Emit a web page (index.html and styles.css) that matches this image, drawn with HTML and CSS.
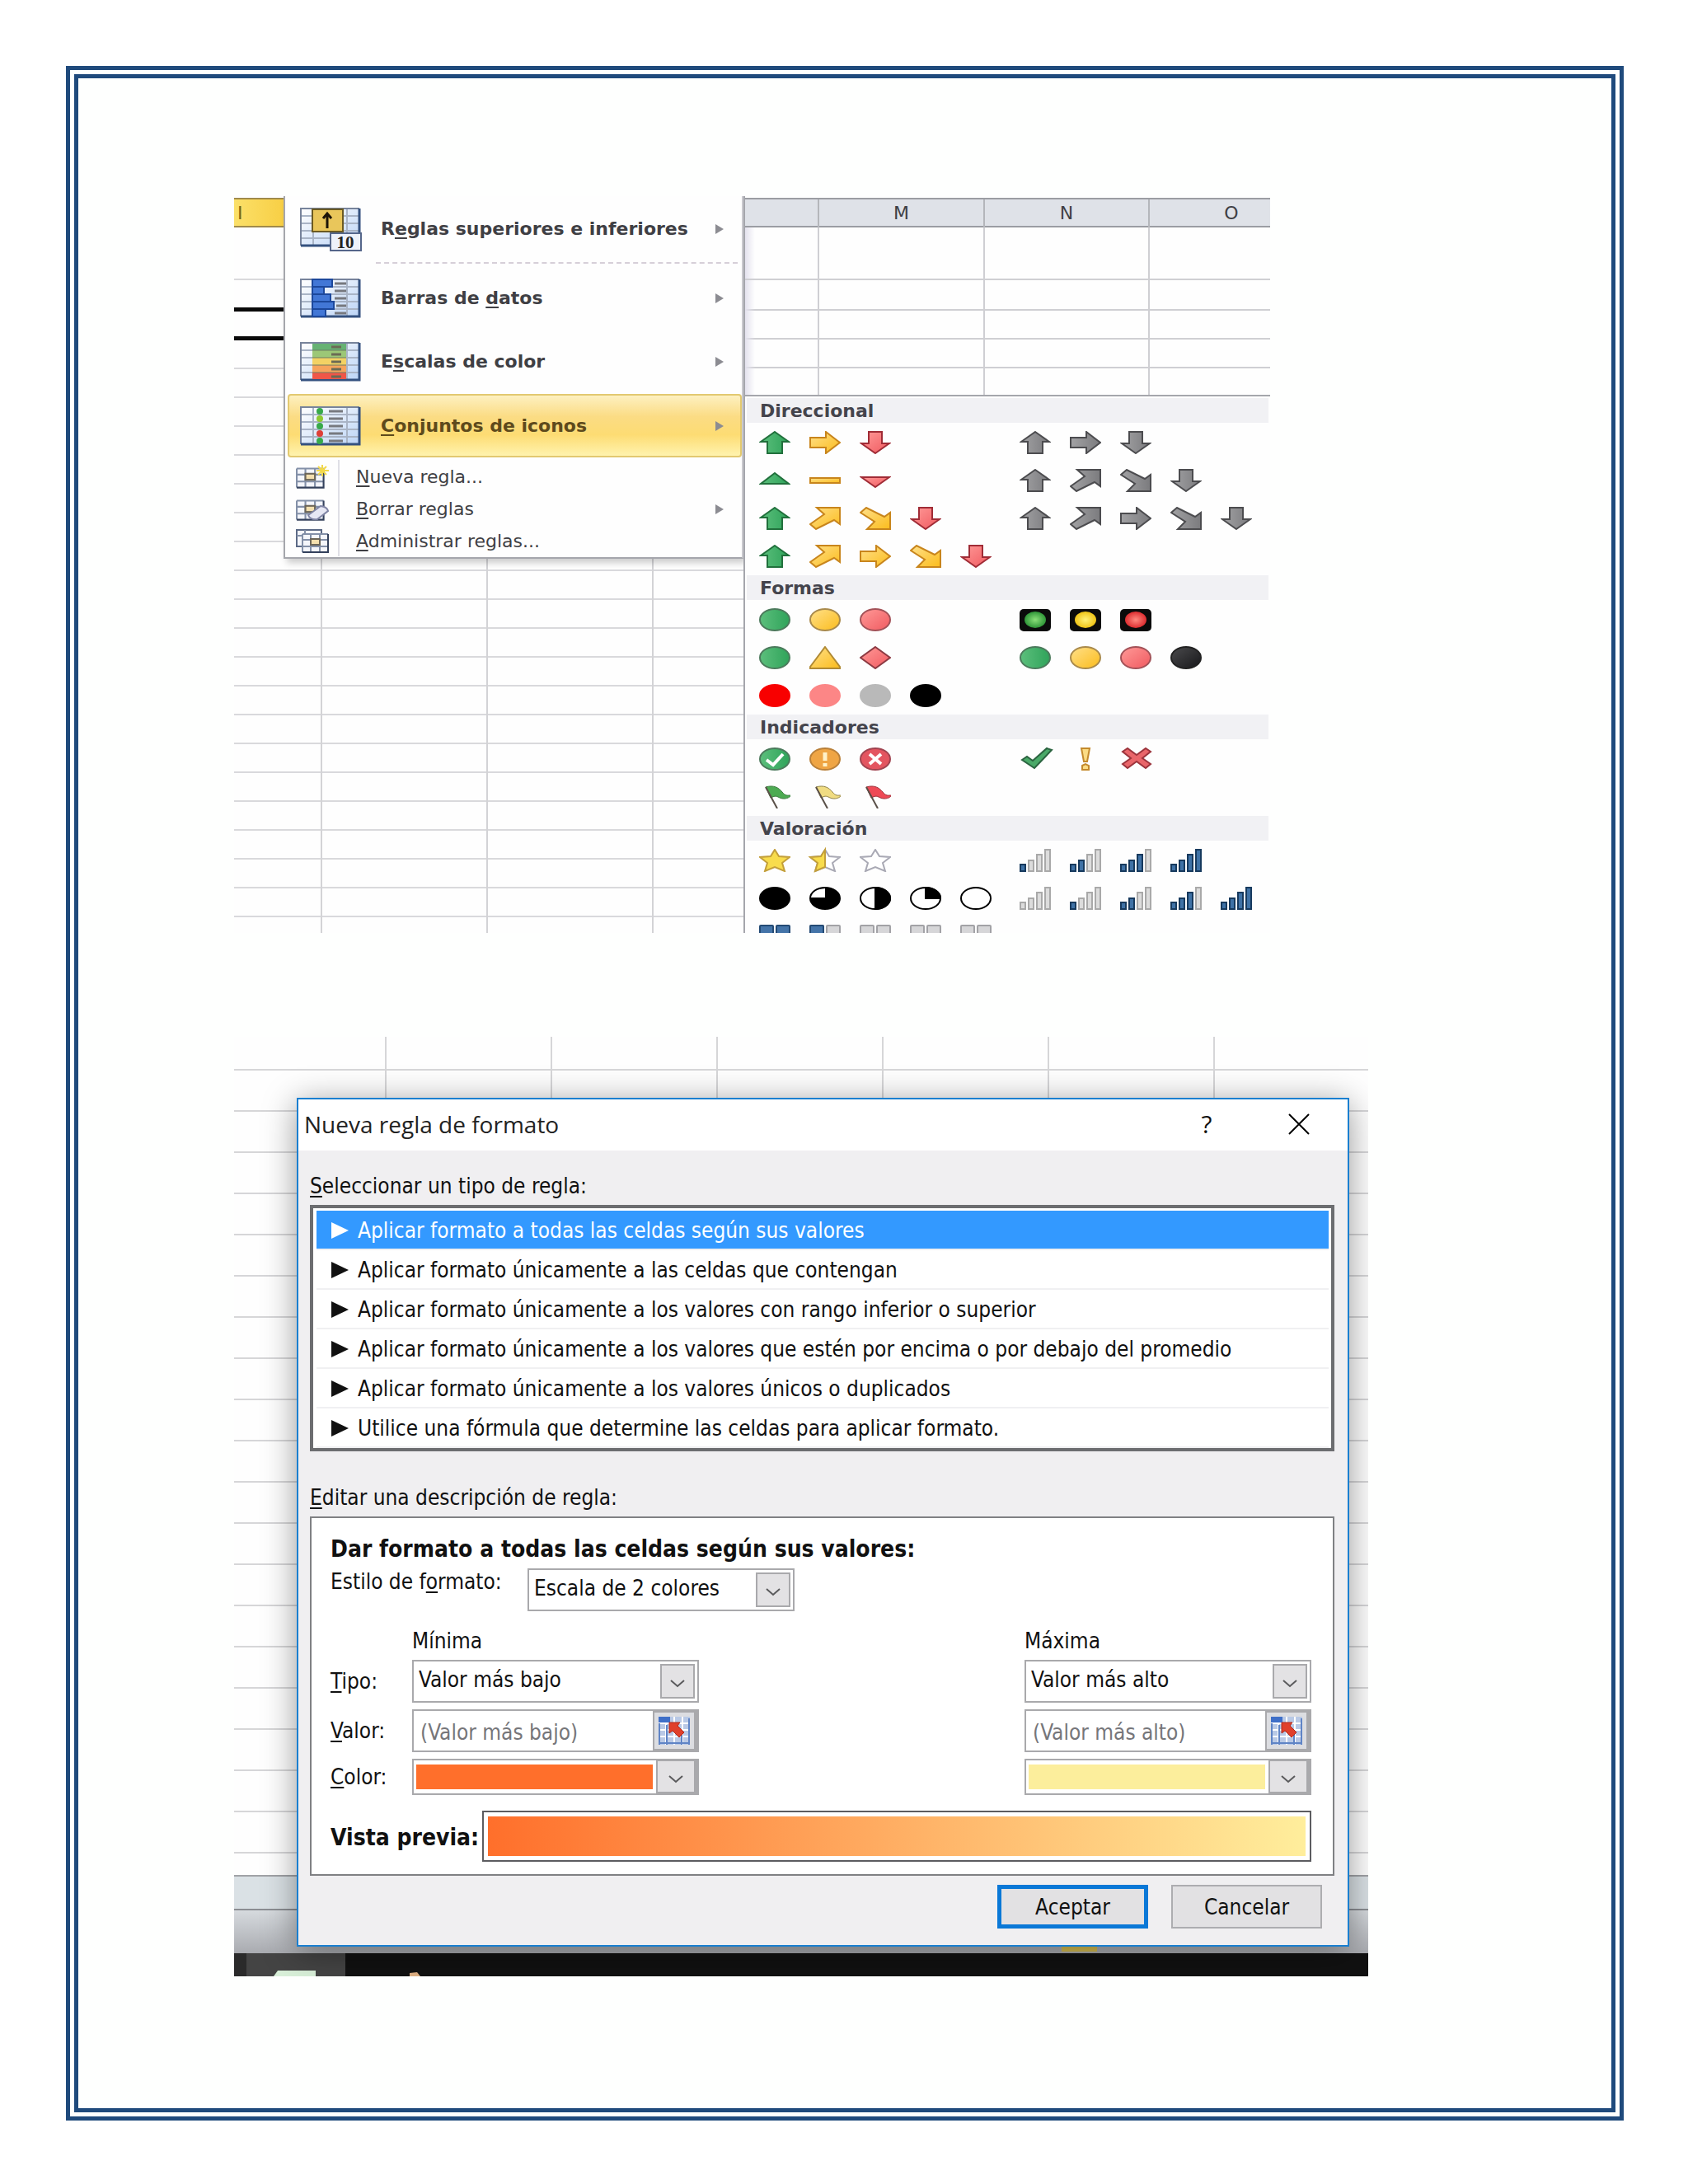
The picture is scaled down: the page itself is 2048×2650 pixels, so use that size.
FILE: index.html
```html
<!DOCTYPE html>
<html lang="es">
<head>
<meta charset="utf-8">
<title>Formato condicional</title>
<meta name="viewport" content="width=device-width, initial-scale=1">
<link rel="stylesheet" href="styles.css">
</head>
<body>
<svg class="defs" aria-hidden="true">
  <defs>
    <linearGradient id="g-green"><stop offset="0" stop-color="#5cbf7c"/><stop offset="1" stop-color="#2fa35a"/></linearGradient>
    <linearGradient id="g-gold" x1="0" y1="0" x2="1" y2="1"><stop offset="0" stop-color="#ffe08a"/><stop offset="1" stop-color="#fbbc1c"/></linearGradient>
    <linearGradient id="g-red" x1="0" y1="0" x2="1" y2="1"><stop offset="0" stop-color="#ff9a98"/><stop offset="1" stop-color="#f05a60"/></linearGradient>
    <linearGradient id="g-gray"><stop offset="0" stop-color="#a2a2a4"/><stop offset="1" stop-color="#7b7b7e"/></linearGradient>
    <linearGradient id="g-dark" x1="0" y1="0" x2="1" y2="1"><stop offset="0" stop-color="#4b4b4d"/><stop offset="1" stop-color="#17171a"/></linearGradient>
    <linearGradient id="g-cell" x1="0" y1="0" x2="1" y2="1"><stop offset="0" stop-color="#ffffff"/><stop offset="1" stop-color="#bcd4f6"/></linearGradient>
    <radialGradient id="l-green"><stop offset="0" stop-color="#8be07a"/><stop offset="1" stop-color="#2f9638"/></radialGradient>
    <radialGradient id="l-gold"><stop offset="0" stop-color="#fff27a"/><stop offset="1" stop-color="#efc416"/></radialGradient>
    <radialGradient id="l-red"><stop offset="0" stop-color="#ff8a80"/><stop offset="1" stop-color="#dd2d30"/></radialGradient>
  </defs>
  <symbol id="up" viewBox="0 0 38 28"><path d="M19 1 36 13H28V27H10V13H2Z"/></symbol>
  <symbol id="down" viewBox="0 0 38 28"><path d="M19 27 36 15H27V1H11V15H2Z"/></symbol>
  <symbol id="right" viewBox="0 0 38 28"><path d="M1 8H20V1L37 14 20 27V20H1Z"/></symbol>
  <symbol id="ne" viewBox="0 0 38 28"><path d="M9 1H37V21L30 16 8 27 1 21 18 9Z"/></symbol>
  <symbol id="se" viewBox="0 0 38 28"><path d="M9 27H37V7L30 12 8 1 1 7 18 18Z"/></symbol>
  <symbol id="tri-up" viewBox="0 0 38 28"><path d="M19 5 36 18H2Z"/></symbol>
  <symbol id="tri-down" viewBox="0 0 38 28"><path d="M19 22 36 10H2Z"/></symbol>
  <symbol id="dash" viewBox="0 0 38 28"><path d="M1 11H37V17H1Z"/></symbol>
  <symbol id="ball" viewBox="0 0 38 28"><ellipse cx="19" cy="14" rx="18" ry="13"/></symbol>
  <symbol id="warn" viewBox="0 0 38 28"><path d="M19 1 37 25V27H1V25Z"/></symbol>
  <symbol id="rhomb" viewBox="0 0 38 28"><path d="M19 1 37 14 19 27 1 14Z"/></symbol>
  <symbol id="lamp" viewBox="0 0 38 28"><rect x="0" y="1" width="38" height="27" rx="5" fill="#0b0b0b" stroke="none"/><ellipse cx="19" cy="14" rx="13" ry="10" stroke="none"/></symbol>
  <symbol id="flag" viewBox="0 0 38 28"><path d="M8 2C18-1 24 3 28 8 32 13 34 12 39 12 35 17 28 17 23 14 19 12 17 14 14 15Z" stroke-width="1"/><path d="M8 2 22 28" fill="none" stroke="#5a5048" stroke-width="2"/></symbol>
  <symbol id="star" viewBox="0 0 38 28"><path d="M19 1 24 9 37 10 28 17 31 27 19 22 7 27 10 17 1 10 14 9Z"/></symbol>
  <symbol id="b1" viewBox="0 0 38 28"><rect x="1" y="19" width="6" height="8"/></symbol>
  <symbol id="b2" viewBox="0 0 38 28"><rect x="11" y="14" width="6" height="13"/></symbol>
  <symbol id="b3" viewBox="0 0 38 28"><rect x="21" y="7" width="6" height="20"/></symbol>
  <symbol id="b4" viewBox="0 0 38 28"><rect x="31" y="1" width="6" height="26"/></symbol>
  <symbol id="bars" viewBox="0 0 38 28"><use href="#b1"/><use href="#b2"/><use href="#b3"/><use href="#b4"/></symbol>
  <symbol id="bars0" viewBox="0 0 38 28"><use href="#bars" fill="#dcdcdc" stroke="#a9a9a9"/></symbol>
  <symbol id="bars1" viewBox="0 0 38 28"><use href="#bars" fill="#dcdcdc" stroke="#a9a9a9"/><g fill="#3f72a6" stroke="#173a5e"><use href="#b1"/></g></symbol>
  <symbol id="bars2" viewBox="0 0 38 28"><use href="#bars" fill="#dcdcdc" stroke="#a9a9a9"/><g fill="#3f72a6" stroke="#173a5e"><use href="#b1"/><use href="#b2"/></g></symbol>
  <symbol id="bars3" viewBox="0 0 38 28"><use href="#bars" fill="#dcdcdc" stroke="#a9a9a9"/><g fill="#3f72a6" stroke="#173a5e"><use href="#b1"/><use href="#b2"/><use href="#b3"/></g></symbol>
  <symbol id="bars4" viewBox="0 0 38 28"><use href="#bars" fill="#3f72a6" stroke="#173a5e"/></symbol>
  <symbol id="boxes" viewBox="0 0 38 28"><rect x="1" y="1" width="16" height="12" rx="1"/><rect x="21" y="1" width="16" height="12" rx="1"/><rect x="1" y="15" width="16" height="12" rx="1"/><rect x="21" y="15" width="16" height="12" rx="1"/></symbol>
  <symbol id="sheet" viewBox="0 0 74 54"><rect x="1" y="1" width="71" height="45" fill="url(#g-cell)" stroke="none"/><path d="M1 10H72M1 19H72M1 28H72M1 37H72M16 1V46M57 1V46" stroke="#a9b4c6" fill="none" stroke-width="2"/><path d="M1 46V1H72" fill="none" stroke="#77839b" stroke-width="2"/><path d="M72 1V46H1" fill="none" stroke="#34517f" stroke-width="3"/></symbol>
  <symbol id="mini" viewBox="0 0 40 28"><rect x="1" y="4" width="31" height="22" fill="#f4f6fb"/><path d="M1 4H32M1 11H32M1 19H32M1 4V26M11 4V26M22 4V26" stroke="#8390a8" stroke-width="2" fill="none"/><path d="M32 4V26H1" stroke="#34415c" stroke-width="2" fill="none"/><rect x="11" y="10" width="11" height="7" fill="#f3dfae" stroke="#6b6558" stroke-width="2"/></symbol>
  <symbol id="chev" viewBox="0 0 20 12"><path d="M2 2 10 9 18 2" fill="none" stroke="#5a5a5c" stroke-width="2"/></symbol>
  <symbol id="picker" viewBox="0 0 38 34"><rect x="0" y="0" width="38" height="34" fill="#b9c9e6"/><rect x="0" y="0" width="14" height="7" fill="#3f6fc8"/><path d="M0 8H38M0 16H38M0 24H38M9 8V34M19 0V34M29 0V34" stroke="#fff" stroke-width="2"/><path d="M1 8V34M10 10V34M0 32H38M28 18V34M37 2V34" stroke="#5f84c6" stroke-width="2"/><path d="M13 7H26L23 11 31 19 25 25 17 17 13 20Z" fill="#e0402c" stroke="#b02a1c"/></symbol>
</svg>

<main class="page">

  <figure class="sheet">
    <div class="sheet-left">
      <div class="column-i">
        <div class="active-head">I</div>
        <div class="tall-row"></div>
        <div class="thick-row"></div>
        <div class="thick-row"></div>
      </div>
      <nav class="menu">
        <button class="item first"><svg class="big"><use href="#sheet"/><rect x="16" y="2" width="37" height="27" fill="#e9c65b" stroke="#6b5a22" stroke-width="2"/><path d="M34 25V9M29 13 34 7 39 13" stroke="#1c1408" stroke-width="3" fill="none"/><rect x="38" y="31" width="37" height="21" fill="#eef2fa" stroke="#55668a" stroke-width="2"/><text x="56" y="49" class="ten" text-anchor="middle">10</text></svg><span>R<u>e</u>glas superiores e inferiores</span><i class="more"></i></button>
        <button class="item"><svg class="big"><use href="#sheet"/><path d="M16 1H40V10H30V19H38V28H42V37H32V46H16Z" fill="#4277d6" stroke="#1c489c" stroke-width="2"/><path d="M16 10H30M16 19H30M16 28H38M16 37H32" stroke="#1c489c" stroke-width="2"/><path d="M43 6H57M43 15H57M43 24H57M45 33H57M43 42H57" stroke="#77797f" stroke-width="3"/></svg><span>Barras de <u>d</u>atos</span><i class="more"></i></button>
        <button class="item"><svg class="big"><use href="#sheet"/><path d="M16 2H57V10H16Z" fill="#66b273"/><path d="M16 10H57V19H16Z" fill="#9cc777"/><path d="M16 19H57V28H16Z" fill="#f3d264"/><path d="M16 28H57V37H16Z" fill="#f6a45c"/><path d="M16 37H57V45H16Z" fill="#ef5648"/><path d="M16 10H57M16 19H57M16 28H57M16 37H57" stroke="#6f7c62" stroke-width="1"/><path d="M39 6H51M39 15H51M39 24H51M39 33H51M39 42H51" stroke="#6b6a55" stroke-width="3"/></svg><span>E<u>s</u>calas de color</span><i class="more"></i></button>
        <button class="item active"><svg class="big"><use href="#sheet"/><path d="M36 6H53M36 15H53M36 24H53M36 33H53M36 42H53" stroke="#77797f" stroke-width="3"/><g fill="#38a94b"><circle cx="25" cy="6" r="4"/><circle cx="25" cy="15" r="4" fill="#8fc931"/><circle cx="25" cy="24" r="4"/><circle cx="25" cy="33" r="4" fill="#de3f38"/><circle cx="25" cy="42" r="4"/></g></svg><span><u>C</u>onjuntos de iconos</span><i class="more"></i></button>
        <div class="commands">
          <button class="item small"><svg class="little"><use href="#mini"/><path d="M32 0V14M25 7H40M27 2 37 12M37 2 27 12" stroke="#f3d94a" stroke-width="2"/></svg><span><u>N</u>ueva regla...</span></button>
          <button class="item small"><svg class="little"><use href="#mini"/><path d="M15 22 30 11Q38 12 39 17L26 27Q17 28 15 22Z" fill="#e6e7f4" stroke="#7f84a4" stroke-width="2"/></svg><span><u>B</u>orrar reglas</span><i class="more"></i></button>
          <button class="item small"><svg class="little"><rect x="1" y="1" width="30" height="20" fill="#f4f6fb" stroke="#5c6a86" stroke-width="2"/><path d="M1 8H31M11 1V21" stroke="#8390a8" stroke-width="2"/><g transform="translate(7 2)"><use href="#mini" width="40" height="28"/></g></svg><span><u>A</u>dministrar reglas...</span></button>
        </div>
      </nav>
    </div>

    <div class="sheet-right">
      <div class="heads"><span></span><span>M</span><span>N</span><span>O</span></div>
      <div class="cells"><div class="tall-row"></div></div>
      <div class="gallery">
        <h3>Direccional</h3>
        <div class="sets">
          <button class="set"><svg fill="url(#g-green)" stroke="#21703c"><use href="#up"/></svg><svg fill="url(#g-gold)" stroke="#c8851c"><use href="#right"/></svg><svg fill="url(#g-red)" stroke="#a02c36"><use href="#down"/></svg></button>
          <button class="set"><svg fill="url(#g-gray)" stroke="#4c4c4f"><use href="#up"/></svg><svg fill="url(#g-gray)" stroke="#4c4c4f"><use href="#right"/></svg><svg fill="url(#g-gray)" stroke="#4c4c4f"><use href="#down"/></svg></button>
          <button class="set"><svg fill="url(#g-green)" stroke="#21703c"><use href="#tri-up"/></svg><svg fill="url(#g-gold)" stroke="#c8851c"><use href="#dash"/></svg><svg fill="url(#g-red)" stroke="#a02c36"><use href="#tri-down"/></svg></button>
          <button class="set"><svg fill="url(#g-gray)" stroke="#4c4c4f"><use href="#up"/></svg><svg fill="url(#g-gray)" stroke="#4c4c4f"><use href="#ne"/></svg><svg fill="url(#g-gray)" stroke="#4c4c4f"><use href="#se"/></svg><svg fill="url(#g-gray)" stroke="#4c4c4f"><use href="#down"/></svg></button>
          <button class="set"><svg fill="url(#g-green)" stroke="#21703c"><use href="#up"/></svg><svg fill="url(#g-gold)" stroke="#c8851c"><use href="#ne"/></svg><svg fill="url(#g-gold)" stroke="#c8851c"><use href="#se"/></svg><svg fill="url(#g-red)" stroke="#a02c36"><use href="#down"/></svg></button>
          <button class="set"><svg fill="url(#g-gray)" stroke="#4c4c4f"><use href="#up"/></svg><svg fill="url(#g-gray)" stroke="#4c4c4f"><use href="#ne"/></svg><svg fill="url(#g-gray)" stroke="#4c4c4f"><use href="#right"/></svg><svg fill="url(#g-gray)" stroke="#4c4c4f"><use href="#se"/></svg><svg fill="url(#g-gray)" stroke="#4c4c4f"><use href="#down"/></svg></button>
          <button class="set"><svg fill="url(#g-green)" stroke="#21703c"><use href="#up"/></svg><svg fill="url(#g-gold)" stroke="#c8851c"><use href="#ne"/></svg><svg fill="url(#g-gold)" stroke="#c8851c"><use href="#right"/></svg><svg fill="url(#g-gold)" stroke="#c8851c"><use href="#se"/></svg><svg fill="url(#g-red)" stroke="#a02c36"><use href="#down"/></svg></button>
        </div>
        <h3>Formas</h3>
        <div class="sets">
          <button class="set"><svg fill="url(#g-green)" stroke="#4c7a5c"><use href="#ball"/></svg><svg fill="url(#g-gold)" stroke="#a98a4c"><use href="#ball"/></svg><svg fill="url(#g-red)" stroke="#a35258"><use href="#ball"/></svg></button>
          <button class="set"><svg fill="url(#l-green)"><use href="#lamp"/></svg><svg fill="url(#l-gold)"><use href="#lamp"/></svg><svg fill="url(#l-red)"><use href="#lamp"/></svg></button>
          <button class="set"><svg fill="url(#g-green)" stroke="#4c7a5c"><use href="#ball"/></svg><svg fill="url(#g-gold)" stroke="#b08a34"><use href="#warn"/></svg><svg fill="url(#g-red)" stroke="#8c3a42"><use href="#rhomb"/></svg></button>
          <button class="set"><svg fill="url(#g-green)" stroke="#4c7a5c"><use href="#ball"/></svg><svg fill="url(#g-gold)" stroke="#a98a4c"><use href="#ball"/></svg><svg fill="url(#g-red)" stroke="#a35258"><use href="#ball"/></svg><svg fill="url(#g-dark)" stroke="#222"><use href="#ball"/></svg></button>
          <button class="set"><svg fill="#f80000" stroke="#f80000"><use href="#ball"/></svg><svg fill="#fc8686" stroke="#fc8686"><use href="#ball"/></svg><svg fill="#b9b9b9" stroke="#b9b9b9"><use href="#ball"/></svg><svg fill="#000" stroke="#000"><use href="#ball"/></svg></button>
        </div>
        <h3>Indicadores</h3>
        <div class="sets">
          <button class="set"><svg fill="url(#g-green)" stroke="#4c7a5c"><use href="#ball"/><path d="M9 15 17 21 29 8" fill="none" stroke="#fff" stroke-width="4"/></svg><svg fill="#efa544" stroke="#b9803a"><use href="#ball"/><path d="M19 6V16M19 19V23" stroke="#fff2c8" stroke-width="5"/></svg><svg fill="#e35560" stroke="#a04450"><use href="#ball"/><path d="M12 8 26 20M26 8 12 20" stroke="#fff" stroke-width="4"/></svg></button>
          <button class="set"><svg fill="#4aa968" stroke="#2b6440"><path d="M3 15 9 11 16 16 33 1 39 3 18 25Z"/></svg><svg fill="#fbdc84" stroke="#c48a2c"><path d="M14 1H24L21 17H17ZM15 22 19 20 23 22V27H15Z"/></svg><svg fill="#e9666a" stroke="#9c343c"><path d="M3 5 9 1 20 9 31 1 37 5 27 13 37 20 31 25 20 17 9 25 3 20 13 13Z"/></svg></button>
          <button class="set"><svg fill="#4dab52" stroke="#3b7a3e"><use href="#flag"/></svg><svg fill="#f0dc82" stroke="#8f8146"><use href="#flag"/></svg><svg fill="#ee4a56" stroke="#9c3038"><use href="#flag"/></svg></button>
        </div>
        <h3>Valoración</h3>
        <div class="sets">
          <button class="set"><svg fill="#f8dc4c" stroke="#c39f3a"><use href="#star"/></svg><svg fill="#fff" stroke="#a9a9b4"><use href="#star"/><path d="M19 1V22L7 27 10 17 1 10 14 9Z" fill="#f8dc4c" stroke="#c39f3a"/></svg><svg fill="#fff" stroke="#a9a9b4"><use href="#star"/></svg></button>
          <button class="set"><svg><use href="#bars1"/></svg><svg><use href="#bars2"/></svg><svg><use href="#bars3"/></svg><svg><use href="#bars4"/></svg></button>
          <button class="set"><svg fill="#000" stroke="#000"><use href="#ball"/></svg><svg fill="#000" stroke="#000"><use href="#ball"/><path d="M19 13V2Q4 3 2 13Z" fill="#fff" stroke="none"/></svg><svg fill="#fff" stroke="#000"><use href="#ball"/><path d="M19 1A18 13 0 0 1 19 27Z" fill="#000"/></svg><svg fill="#fff" stroke="#000"><use href="#ball"/><path d="M19 1A18 13 0 0 1 37 14H19Z" fill="#000"/></svg><svg fill="#fff" stroke="#000"><use href="#ball"/></svg></button>
          <button class="set"><svg><use href="#bars0"/></svg><svg><use href="#bars1"/></svg><svg><use href="#bars2"/></svg><svg><use href="#bars3"/></svg><svg><use href="#bars4"/></svg></button>
        </div>
        <div class="sets cut">
          <button class="set"><svg fill="#4474a8" stroke="#234a74"><use href="#boxes"/></svg><svg fill="#d6d6d8" stroke="#a2a2a6"><use href="#boxes"/><rect x="1" y="1" width="16" height="12" rx="1" fill="#4474a8" stroke="#234a74"/></svg><svg fill="#d6d6d8" stroke="#a2a2a6"><use href="#boxes"/></svg><svg fill="#d6d6d8" stroke="#a2a2a6"><use href="#boxes"/></svg><svg fill="#d6d6d8" stroke="#a2a2a6"><use href="#boxes"/></svg></button>
        </div>
      </div>
    </div>
  </figure>

  <figure class="desk">
    <svg class="taskbar" viewBox="0 0 1376 28" preserveAspectRatio="xMinYMax slice" aria-hidden="true"><rect width="1376" height="28" fill="#111"/><rect width="15" height="28" fill="#2a2a2a"/><rect x="15" width="120" height="28" fill="#444"/><path d="M48 28 53 21H99V28Z" fill="#d9f0d9"/><path d="M213 28V24L222 23 226 28Z" fill="#e0b184"/></svg>
    <span class="status-mark"></span>
    <form class="dialog">
      <header class="titlebar"><h2>Nueva regla de formato</h2><button type="button" class="tool">?</button><button type="button" class="tool" aria-label="Cerrar"><svg width="26" height="26"><path d="M1 1 25 25M25 1 1 25" stroke="#000" stroke-width="2"/></svg></button></header>
      <div class="dialog-body">
        <p class="caption"><u>S</u>eleccionar un tipo de regla:</p>
        <ul class="rules">
          <li class="chosen"><i class="tri"></i>Aplicar formato a todas las celdas según sus valores</li>
          <li><i class="tri"></i>Aplicar formato únicamente a las celdas que contengan</li>
          <li><i class="tri"></i>Aplicar formato únicamente a los valores con rango inferior o superior</li>
          <li><i class="tri"></i>Aplicar formato únicamente a los valores que estén por encima o por debajo del promedio</li>
          <li><i class="tri"></i>Aplicar formato únicamente a los valores únicos o duplicados</li>
          <li><i class="tri"></i>Utilice una fórmula que determine las celdas para aplicar formato.</li>
        </ul>
        <p class="caption second"><u>E</u>ditar una descripción de regla:</p>
        <section class="editor">
          <h3>Dar formato a todas las celdas según sus valores:</h3>
          <div class="style-row">
            <label for="style">Estilo de f<u>o</u>rmato:</label>
            <div class="drop"><select id="style"><option>Escala de 2 colores</option></select><span class="arrow"><svg><use href="#chev"/></svg></span></div>
          </div>
          <div class="scale">
            <span></span><span class="head">Mínima</span><span class="head max">Máxima</span>
            <label for="type-min"><u>T</u>ipo:</label>
            <div class="drop"><select id="type-min"><option>Valor más bajo</option></select><span class="arrow"><svg><use href="#chev"/></svg></span></div>
            <div class="drop max"><select id="type-max" aria-label="Tipo"><option>Valor más alto</option></select><span class="arrow"><svg><use href="#chev"/></svg></span></div>
            <label for="value-min"><u>V</u>alor:</label>
            <div class="field"><input id="value-min" type="text" value="(Valor más bajo)"><button type="button" class="pick" aria-label="Elegir celda"><svg><use href="#picker"/></svg></button></div>
            <div class="field max"><input id="value-max" type="text" value="(Valor más alto)" aria-label="Valor"><button type="button" class="pick" aria-label="Elegir celda"><svg><use href="#picker"/></svg></button></div>
            <label for="color-min"><u>C</u>olor:</label>
            <button type="button" id="color-min" class="color"><span class="swatch orange"></span><span class="chip"><svg><use href="#chev"/></svg></span></button>
            <button type="button" class="color max" aria-label="Color"><span class="swatch yellow"></span><span class="chip"><svg><use href="#chev"/></svg></span></button>
          </div>
          <div class="preview-row"><strong>Vista previa:</strong><div class="preview"></div></div>
        </section>
        <div class="actions"><button type="submit" class="ok">Aceptar</button><button type="button">Cancelar</button></div>
      </div>
    </form>
  </figure>

</main>
</body>
</html>
```
FILE: styles.css
```css
* { box-sizing: border-box; }

body { margin: 0; background: #fff; color: #111; }

button, input, select { font: inherit; color: inherit; margin: 0; border-radius: 0; }
button { background: none; border: 0; padding: 0; text-align: left; }
h2, h3, p, ul, figure { margin: 0; padding: 0; font-size: inherit; }
u { text-decoration-thickness: 2px; text-underline-offset: 3px; text-decoration-skip-ink: none; }

.defs { position: absolute; width: 0; height: 0; }

.page {
  margin: 80px 78px 78px 80px;
  padding: 143px 189px 160px;
  border: 15px double #1f4a7c;
  background: #fefffe;
  display: flex;
  flex-direction: column;
  gap: 126px;
}

/* Spreadsheet with the conditional format menu open */
.sheet {
  width: 100%;
  max-width: 1257px;
  display: grid;
  grid-template-columns: 618px 1fr;
  overflow: hidden;
  font-family: "DejaVu Sans", sans-serif;
  font-size: 22px;
  color: #3f3f44;
}

.sheet-left {
  display: grid;
  grid-template-columns: 60px 1fr;
  align-items: start;
  background:
    linear-gradient(#d3d3d6, #d3d3d6) 105px 440px / 2px 100% no-repeat,
    linear-gradient(#d3d3d6, #d3d3d6) 306px 440px / 2px 100% no-repeat,
    linear-gradient(#d3d3d6, #d3d3d6) 507px 440px / 2px 100% no-repeat,
    linear-gradient(transparent 33px, #d9d9dc 33px) 0 210px / 100% 35px repeat-y;
  background-color: #fefefe;
}

.column-i { background: #fefefe; }
.active-head {
  margin-top: 2px;
  height: 36px;
  line-height: 34px;
  padding-left: 4px;
  border: solid #a08a4a;
  border-width: 2px 0;
  background: linear-gradient(90deg, #fbe069, #f8cf45);
  color: #7a6410;
}
.tall-row { height: 64px; border-bottom: 2px solid #cfcfd3; }
.thick-row { height: 35px; border-bottom: 5px solid #0a0a0a; }
.column-i .tall-row { margin-bottom: 3px; border-color: #d9d9dc; }

.menu {
  background: #fefefe;
  border: 2px solid #a5a6ac;
  border-top: 0;
  border-right-color: #c9c9ce;
  box-shadow: 4px 5px 8px rgba(0, 0, 0, .2);
  height: 440px;
}
.item {
  display: flex;
  align-items: center;
  width: 100%;
  height: 77px;
  padding: 2px 22px 0 17px;
  font-weight: bold;
}
.item span { flex: 1; white-space: nowrap; }
.item.first { height: 83px; padding-top: 0; padding-bottom: 4px; position: relative; margin-bottom: 1px; }
.item.first::after {
  content: "";
  position: absolute;
  left: 110px;
  right: 5px;
  bottom: 1px;
  border-bottom: 2px dashed #d6cfd8;
}
.item.active {
  margin: 2px 0 3px 3px;
  padding: 0 20px 0 12px;
  width: auto;
  min-width: calc(100% - 3px);
  border: 2px solid #e2c970;
  border-radius: 4px;
  background: linear-gradient(#fdf0c0, #fbdc84 35%, #fddc73 65%, #fff3ae);
  color: #5e4a1c;
}
.big { width: 76px; height: 54px; margin: 6px 23px 0 0; flex: none; }
.item.first .big { margin-top: 2px; }
.item .more {
  border: solid transparent;
  border-width: 6px 0 6px 10px;
  border-left-color: #8c8c92;
}
.ten { font: bold 21px "Liberation Serif", serif; fill: #222; }
.commands {
  background: linear-gradient(#dfdfe6, #dfdfe6) 64px 0 / 2px 100% no-repeat;
}
.item.small { height: 39px; padding-left: 13px; font-weight: normal; }
.little { width: 42px; height: 30px; margin-right: 31px; }

.sheet-right { border-left: 2px solid #a5a6ac; background: #fefefe; min-width: 0; }
.heads {
  margin-top: 2px;
  height: 36px;
  display: grid;
  grid-template-columns: 90px 201px 200px 200px;
  background: #dfe2e8;
  border: solid #9b9da3;
  border-width: 2px 0;
}
.heads span { border-right: 2px solid #b4b6bb; text-align: center; line-height: 34px; }
.cells {
  height: 203px;
  background:
    linear-gradient(#cfcfd3, #cfcfd3) 88px 0 / 2px 100% no-repeat,
    linear-gradient(#cfcfd3, #cfcfd3) 289px 0 / 2px 100% no-repeat,
    linear-gradient(#cfcfd3, #cfcfd3) 489px 0 / 2px 100% no-repeat,
    linear-gradient(90deg, #e4e2ee, transparent 12px),
    linear-gradient(transparent 33px, #cfcfd3 33px) 0 66px / 100% 35px no-repeat,
    linear-gradient(transparent 33px, #cfcfd3 33px) 0 101px / 100% 35px no-repeat,
    linear-gradient(transparent 33px, #cfcfd3 33px) 0 136px / 100% 35px no-repeat;
}
.gallery { border-top: 2px solid #a5a6ac; padding-top: 2px; }
.gallery h3 {
  height: 30px;
  line-height: 32px;
  margin: 0 2px;
  padding-left: 16px;
  background: #f1f1f4;
  color: #44444c;
}
.sets {
  display: grid;
  grid-template-columns: 316px 1fr;
  grid-auto-rows: 46px;
  padding: 1px 0 0 17px;
}
.sets.cut { height: 19px; overflow: hidden; padding-top: 0; }
.set { display: flex; align-items: center; gap: 23px; }
.set svg { width: 38px; height: 28px; stroke-width: 2; overflow: visible; flex: none; }

/* Dialog over the spreadsheet */
.desk {
  position: relative;
  overflow: hidden;
  width: 100%;
  max-width: 1376px;
  padding: 74px 23px 36px 76px;
  background:
    linear-gradient(#8b8e93, #8b8e93) 0 calc(100% - 80px) / 100% 2px no-repeat,
    linear-gradient(#d6dade, #a9abb0) 0 calc(100% - 28px) / 100% 52px no-repeat,
    linear-gradient(#a0a2a6, #a0a2a6) 0 calc(100% - 121px) / 100% 2px no-repeat,
    linear-gradient(#dae1e5, #dae1e5) 0 calc(100% - 82px) / 100% 40px no-repeat,
    linear-gradient(90deg, transparent 199px, #d6d6d8 199px) -16px 0 / 201px 100% repeat-x,
    linear-gradient(transparent 48px, #d6d6d8 48px) 0 -9px / 100% 50px repeat-y;
  background-color: #fefefe;
  font-family: "DejaVu Sans Condensed", "DejaVu Sans", sans-serif;
  font-size: 26px;
  line-height: 32px;
}
.taskbar { position: absolute; left: 0; bottom: 0; width: 100%; height: 28px; }
.status-mark { position: absolute; left: 73%; bottom: 30px; width: 43px; height: 12px; background: #d8bf50; }

.dialog {
  position: relative;
  border: 2px solid #1a7fd0;
  background: #f0eff1;
  box-shadow: 0 6px 38px rgba(0, 0, 0, .4);
}
.titlebar { display: flex; align-items: center; height: 62px; padding: 0 41px 3px 7px; background: #fff; }
.titlebar h2 { flex: 1; font: 28px/32px "Open Sans", sans-serif; color: #222; }
.tool { width: 36px; height: 36px; margin-left: 76px; display: flex; align-items: center; justify-content: center; font: 30px/36px "Open Sans", sans-serif; }
.dialog-body { padding: 27px 16px 20px 14px; }
.caption { margin-bottom: 7px; }
.caption.second { margin-top: 40px; }

.rules { list-style: none; background: #fff; border: 4px solid #6c6d70; padding: 3px 3px 0 4px; }
.rules li { display: flex; align-items: center; gap: 11px; height: 48px; padding: 2px 0 0 18px; border-bottom: 2px solid #f0f0f2; }
.rules .chosen { background: #3399ff; color: #fff; }
.tri { border: solid transparent; border-width: 10px 0 10px 21px; border-left-color: currentColor; }

.editor { background: #fff; border: 2px solid #7f8083; padding: 22px 26px 15px 23px; }
.editor h3, .preview-row strong { font-weight: bold; font-size: 28px; }
.style-row { display: grid; grid-template-columns: 239px 324px; align-items: start; margin-top: 7px; }

.drop { position: relative; }
.drop select {
  display: block;
  appearance: none;
  width: 100%;
  height: 52px;
  padding: 0 50px 4px 6px;
  border: 2px solid #a9a9ac;
  background: #fff;
}
.drop .arrow {
  position: absolute;
  top: 5px;
  right: 5px;
  width: 42px;
  height: 42px;
  display: flex;
  align-items: center;
  justify-content: center;
  border: 2px solid #a9a9ac;
  background: #e3e2e4;
  pointer-events: none;
}
.arrow svg, .chip svg { width: 20px; height: 12px; margin-top: 6px; }

.scale {
  display: grid;
  grid-template-columns: 99px 348px 1fr 348px;
  grid-template-rows: 30px 52px 52px 44px;
  row-gap: 8px;
  align-items: center;
  margin-top: 21px;
}
.scale .max { grid-column: 4; }
.field { display: flex; height: 52px; border: 2px solid #a9a9ac; background: #fff; }
.field input { flex: 1; min-width: 0; border: 0; padding: 4px 0 0 8px; background: none; color: #76767a; }
.pick { width: 54px; border: solid #a9a9ac; border-width: 2px 4px 2px 2px; background: #dcdde1; display: flex; align-items: center; justify-content: center; }
.pick svg { width: 38px; height: 34px; }
.color { display: flex; height: 44px; border: 2px solid #a9a9ac; background: #fff; }
.swatch { flex: 1; margin: 5px 4px 5px 3px; }
.orange { background: #ff6f2b; }
.yellow { background: #fcee9c; }
.chip { width: 50px; height: 40px; border: solid #a9a9ac; border-width: 1px 4px 2px 2px; background: #e3e2e4; display: flex; align-items: center; justify-content: center; }

.preview-row { display: flex; align-items: center; gap: 7px; margin-top: 19px; }
.preview-row strong { flex: none; width: 177px; white-space: nowrap; padding-top: 4px; }
.preview {
  flex: 1;
  height: 62px;
  padding: 5px;
  border: 2px solid #5c5c60;
  background: linear-gradient(90deg, #ff6f2b, #ffee9c) content-box, #fff;
}

.actions { display: flex; justify-content: flex-end; gap: 28px; margin: 11px 15px 0 0; }
.actions button { width: 183px; height: 53px; text-align: center; border: 2px solid #adadb0; background: #e2e1e3; }
.actions .ok { border: 5px solid #0a78d7; }
```
